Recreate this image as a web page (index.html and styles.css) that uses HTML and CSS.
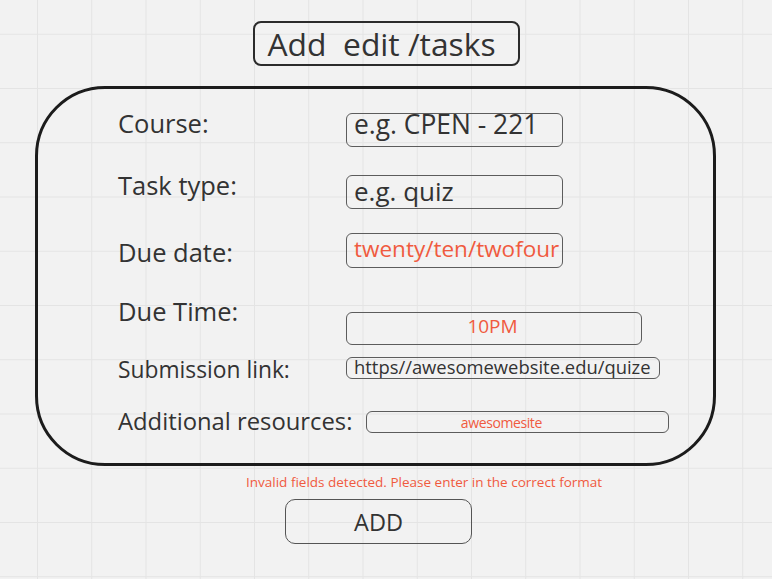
FILE: index.html
```html
<!DOCTYPE html>
<html lang="en">
<head>
<meta charset="utf-8">
<title>Add edit tasks</title>
<link rel="stylesheet" href="styles.css">
</head>
<body>
<div class="page">
  <header class="title-wrap">
    <h1 class="title">Add  edit /tasks</h1>
  </header>
  <section class="card">
    <div class="row r1">
      <span class="label">Course:</span>
      <div class="field f1">e.g. CPEN - 221</div>
    </div>
    <div class="row r2">
      <span class="label">Task type:</span>
      <div class="field f2">e.g. quiz</div>
    </div>
    <div class="row r3">
      <span class="label">Due date:</span>
      <div class="field f3 bad">twenty/ten/twofour</div>
    </div>
    <div class="row r4">
      <span class="label">Due Time:</span>
      <div class="field f4 bad">10PM</div>
    </div>
    <div class="row r5">
      <span class="label small">Submission link:</span>
      <div class="field f5">https//awesomewebsite.edu/quize</div>
    </div>
    <div class="row r6">
      <span class="label mid">Additional resources:</span>
      <div class="field f6 bad">awesomesite</div>
    </div>
  </section>
  <p class="error">Invalid fields detected. Please enter in the correct format</p>
  <button class="add" type="button">ADD</button>
</div>
</body>
</html>
```

FILE: styles.css
```css
html, body {
  margin: 0;
  padding: 0;
}
body {
  min-height: 100vh;
  background-color: #f2f2f2;
  background-image:
    linear-gradient(to right, #e4e4e4 1px, transparent 1px),
    linear-gradient(to bottom, #e4e4e4 1px, transparent 1px);
  background-size: 54.25px 54.25px;
  background-position: 37px 33.75px;
  font-family: "Open Sans", "Noto Sans", sans-serif;
  color: #333;
}
.page {
  padding-top: 21px;
}
.title-wrap {
  display: flex;
  justify-content: center;
}
.title {
  box-sizing: border-box;
  width: 267px;
  height: 45px;
  margin: 0;
  padding-left: 13px;
  border: 2px solid #2b2b2b;
  border-radius: 8px;
  font-size: 31.8px;
  font-weight: 400;
  line-height: 41px;
  white-space: pre;
  color: #333;
}
.card {
  box-sizing: border-box;
  width: 681px;
  height: 380px;
  margin: 20px 0 0 35px;
  padding: 19px 0 0 80px;
  border: 3px solid #1c1c1c;
  border-radius: 70px;
}
.row {
  display: flex;
  align-items: flex-start;
}
.r1 { height: 62px; }
.r2 { height: 63px; }
.r3 { height: 63px; }
.r4 { height: 61px; }
.r5 { height: 50px; }
.label {
  flex: 0 0 228px;
  font-size: 25.5px;
  line-height: 30px;
  color: #333;
}
.label.small {
  font-size: 22.8px;
  line-height: 26px;
}
.label.mid {
  flex: 0 0 auto;
  margin-right: 14px;
  font-size: 23.8px;
  line-height: 28px;
}
.r3 .label { margin-top: 4px; }
.field {
  box-sizing: border-box;
  display: flex;
  align-items: center;
  padding-left: 7px;
  border: 1.5px solid #5c5c5c;
  border-radius: 6px;
  white-space: nowrap;
  color: #333;
}
.field.bad { color: #f05a3e; }
.f1 {
  width: 217px;
  height: 34px;
  margin-top: 5px;
  padding-bottom: 12px;
  font-size: 26.4px;
}
.f2 {
  width: 217px;
  height: 34px;
  margin-top: 5px;
  padding-bottom: 3px;
  font-size: 26px;
}
.f3 {
  width: 217px;
  height: 35px;
  padding-bottom: 4px;
  font-size: 22.5px;
}
.f4 {
  width: 296px;
  height: 33px;
  margin-top: 16px;
  padding-bottom: 6px;
  padding-right: 10px;
  justify-content: center;
  font-size: 19px;
}
.f5 {
  width: 314px;
  height: 22px;
  padding-bottom: 3px;
  font-size: 18.4px;
}
.f6 {
  width: 303px;
  height: 22px;
  margin-top: 4px;
  padding-right: 40px;
  justify-content: center;
  font-size: 14px;
  letter-spacing: -0.4px;
}
.error {
  margin: 7px 0 0;
  padding-left: 246px;
  font-size: 13.5px;
  line-height: 18px;
  color: #f05a3e;
}
.add {
  display: block;
  box-sizing: border-box;
  width: 187px;
  height: 45px;
  margin: 8px 0 0 285px;
  padding: 0;
  border: 1.5px solid #555;
  border-radius: 10px;
  background: transparent;
  font-family: "Open Sans", "Noto Sans", sans-serif;
  font-size: 23.5px;
  color: #333;
}
```
